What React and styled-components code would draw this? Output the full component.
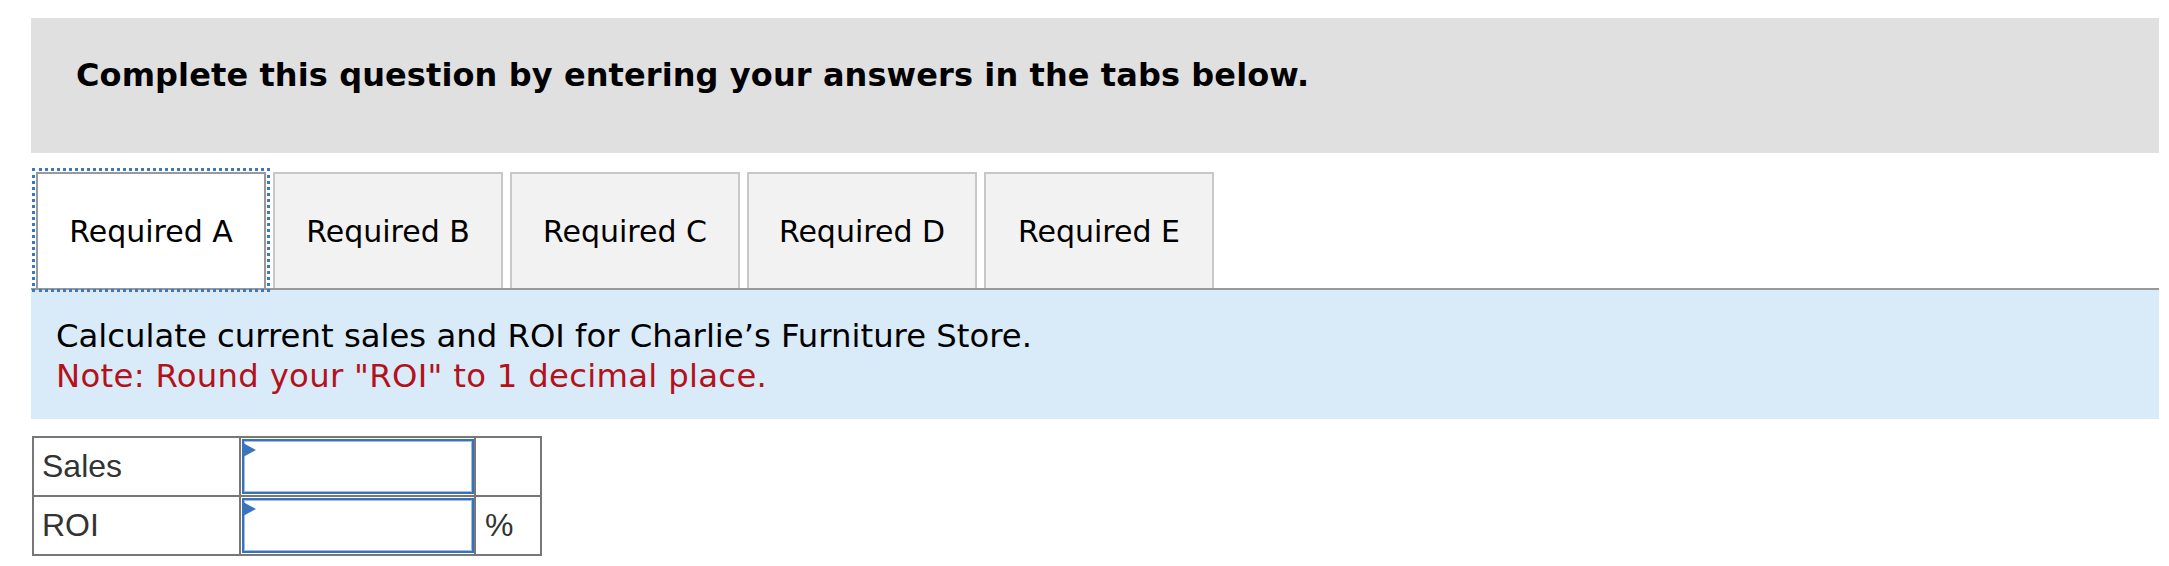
import React from 'react';
import styled, { createGlobalStyle } from 'styled-components';

const GlobalStyle = createGlobalStyle`
  html, body {
    margin: 0;
    padding: 0;
    background: #ffffff;
  }
  body {
    font-family: "DejaVu Sans", Verdana, sans-serif;
    color: #000;
  }
`;

const Page = styled.div`
  margin: 18px 10px 0 31px;
`;

const Banner = styled.div`
  background-color: #e0e0e0;
  height: 135px;
  box-sizing: border-box;
  padding: 38px 0 0 45px;
`;

const BannerTitle = styled.h2`
  margin: 0;
  font-size: 32px;
  font-weight: bold;
  line-height: normal;
  letter-spacing: 0.1px;
`;

const TabList = styled.div`
  display: flex;
  align-items: flex-end;
  gap: 7px;
  margin-top: 19px;
  padding-left: 5px;
  border-bottom: 2px solid #999999;
`;

const Tab = styled.button`
  width: 230px;
  height: 116px;
  box-sizing: border-box;
  margin: 0;
  padding: 0;
  font-family: "DejaVu Sans", Verdana, sans-serif;
  font-size: 30px;
  color: #000;
  background-color: ${props => (props.active ? '#ffffff' : '#f2f2f2')};
  border: 2px solid ${props => (props.active ? '#999999' : '#c8c8c8')};
  border-bottom: none;
  outline: ${props => (props.active ? '3px dotted #3a78c4' : 'none')};
  outline-offset: 1px;
  cursor: pointer;
`;

const Panel = styled.div`
  background-color: #d9ebf9;
  padding: 26px 0 23px 25px;
  font-size: 32.3px;
  line-height: 40px;
`;

const Note = styled.div`
  color: #b3121b;
  letter-spacing: 0.3px;
`;

const AnswerTable = styled.table`
  margin: 17px 0 0 1px;
  border-collapse: collapse;
  font-family: "Liberation Sans", Arial, sans-serif;
  font-size: 32px;
  color: #333333;
`;

const Cell = styled.td`
  border: 2px solid #777777;
  height: 56px;
  padding: 0;
  width: ${props => props.w}px;
  box-sizing: border-box;
`;

const LabelCell = styled(Cell)`
  padding-left: 8px;
`;

const UnitCell = styled(Cell)`
  padding-left: 9px;
`;

const InputCell = styled(Cell)`
  padding: 1px 0 1px 1px;
`;

const InputWrap = styled.div`
  position: relative;
  height: 55px;
`;

const AnswerInput = styled.input`
  display: block;
  width: 100%;
  height: 100%;
  box-sizing: border-box;
  margin: 0;
  border: 2px solid #3a72b8;
  box-shadow: inset 0 0 0 1px #9cbde6;
  background: #fff;
  outline: none;
  font-size: 28px;
`;

const Marker = styled.span`
  position: absolute;
  left: 1px;
  top: 4px;
  width: 0;
  height: 0;
  border-left: 13px solid #3a74bc;
  border-top: 7.5px solid transparent;
  border-bottom: 7.5px solid transparent;
`;

const tabs = ['Required A', 'Required B', 'Required C', 'Required D', 'Required E'];

const rows = [
  { label: 'Sales', unit: '' },
  { label: 'ROI', unit: '%' },
];

function App() {
  return (
    <Page>
      <GlobalStyle />
      <Banner>
        <BannerTitle>Complete this question by entering your answers in the tabs below.</BannerTitle>
      </Banner>
      <TabList>
        {tabs.map((t, i) => (
          <Tab key={t} active={i === 0}>{t}</Tab>
        ))}
      </TabList>
      <Panel>
        <div>Calculate current sales and ROI for Charlie’s Furniture Store.</div>
        <Note>Note: Round your "ROI" to 1 decimal place.</Note>
      </Panel>
      <AnswerTable>
        <tbody>
          {rows.map(r => (
            <tr key={r.label}>
              <LabelCell w={207}>{r.label}</LabelCell>
              <InputCell w={235}>
                <InputWrap>
                  <Marker />
                  <AnswerInput type="text" aria-label={r.label} />
                </InputWrap>
              </InputCell>
              <UnitCell w={66}>{r.unit}</UnitCell>
            </tr>
          ))}
        </tbody>
      </AnswerTable>
    </Page>
  );
}

export default App;
